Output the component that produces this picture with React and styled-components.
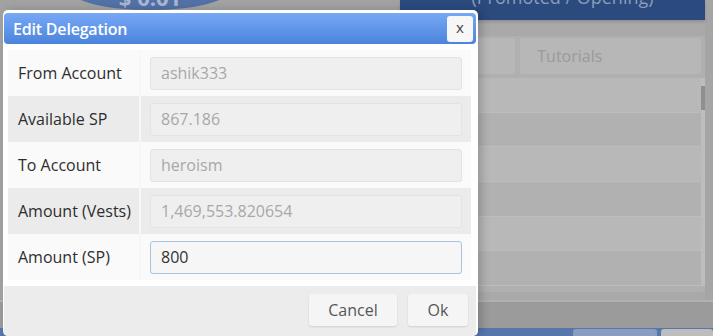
import React from "react";
import styled, { createGlobalStyle } from "styled-components";

const Global = createGlobalStyle`
  html, body { margin: 0; padding: 0; }
  body { font-family: "Open Sans", "Noto Sans", sans-serif; background: #a3a3a3; overflow: hidden; }
`;

const Stage = styled.div`
  position: relative;
  width: 713px;
  height: 336px;
  overflow: hidden;
  background: #a5a5a5;
  display: grid;
  grid-template-rows: 1fr 28px 8px;
`;

const Upper = styled.div`
  display: grid;
  grid-template-columns: 400px 305px 8px;
  min-height: 0;
`;

const LeftCol = styled.div`
  display: flex;
  justify-content: center;
  padding-right: 100px;
  background: #a2a2a2;
`;

const PriceBlob = styled.div`
  width: 160px;
  height: 40px;
  margin-top: -30px;
  border-radius: 50%;
  background: #5271a6;
  color: #a9b7d0;
  font-size: 22px;
  font-weight: 700;
  line-height: 1;
  display: flex;
  align-items: flex-end;
  justify-content: center;
  padding-bottom: 2px;
  box-sizing: border-box;
`;

const RightCol = styled.div`
  display: flex;
  flex-direction: column;
  gap: 16px;
  padding-bottom: 8px;
  background: #a9a9a9;
`;

const PromoBar = styled.div`
  height: 20px;
  background: #2b4a7e;
  color: #8d9dbb;
  font-size: 18px;
  line-height: 1;
  display: flex;
  justify-content: center;
  align-items: flex-start;
  overflow: hidden;
  box-shadow: 0 2px 3px rgba(0,0,0,0.15);
  padding-left: 20px;
`;

const PromoText = styled.span`
  margin-top: -12px;
`;

const Panel = styled.div`
  flex: 1;
  display: flex;
  flex-direction: column;
  background: #b0b0b0;
  border-radius: 3px;
  padding: 2px 0 6px 0;
`;

const Tabs = styled.div`
  display: flex;
  gap: 5px;
  padding: 0 4px 4px 0;
`;

const Tab = styled.div`
  flex: ${p => p.$grow || 1};
  height: 36px;
  background: #b7b7b7;
  border-radius: 3px;
  color: #9a9a9a;
  font-size: 16px;
  display: flex;
  align-items: center;
  padding-left: 17px;
`;

const List = styled.div`
  flex: 1;
  display: grid;
  grid-template-columns: 1fr 4px;
`;

const Rows = styled.div`
  display: flex;
  flex-direction: column;
`;

const ListRow = styled.div`
  flex: 1;
  background: ${p => (p.$alt ? "#b1b1b1" : "#b8b8b8")};
  border-bottom: 1px solid #bdbdbd;
`;

const Scroll = styled.div`
  background: #bdbdbd;
  display: flex;
  flex-direction: column;
`;

const Thumb = styled.div`
  height: 24px;
  margin-top: 8px;
  background: #8f8f8f;
`;

const Band = styled.div`
  background: #9b9b9b;
  border-top: 2px solid #b0b0b0;
`;

const BottomStrip = styled.div`
  background: #5776ab;
  display: flex;
  justify-content: flex-end;
  gap: 4px;
  padding-top: 1px;
`;

const StripBtn = styled.div`
  width: ${p => p.$w}px;
  background: ${p => p.$c};
  border-radius: 3px 3px 0 0;
`;

const Dialog = styled.div`
  position: absolute;
  left: 3px;
  top: 10px;
  width: 475px;
  height: 326px;
  box-sizing: border-box;
  background: #ffffff;
  border-radius: 5px;
  padding: 3px 2px 0 1px;
  display: flex;
  flex-direction: column;
  box-shadow: 4px 0 8px rgba(0,0,0,0.18);
`;

const Header = styled.div`
  height: 31px;
  flex: none;
  border-radius: 4px;
  background: linear-gradient(#78a8f6, #4b84dc);
  display: flex;
  align-items: center;
  justify-content: space-between;
  padding: 0 3px 0 9px;
`;

const Title = styled.div`
  color: #ffffff;
  font-size: 16px;
  font-weight: 600;
  letter-spacing: -0.2px;
`;

const CloseBtn = styled.button`
  width: 26px;
  height: 26px;
  border: none;
  border-radius: 3px;
  background: #f7f7f7;
  color: #444;
  font-family: "Open Sans", sans-serif;
  font-size: 15px;
  padding: 0 0 2px 0;
  line-height: 1;
`;

const Body = styled.div`
  padding: 6px 5px 6px 4px;
  flex: none;
`;

const Table = styled.div`
  display: flex;
  flex-direction: column;
`;

const Row = styled.div`
  height: 46px;
  display: grid;
  grid-template-columns: 133px 1fr;
  background: ${p => (p.$alt ? "#ebebeb" : "#fafafa")};
`;

const Label = styled.div`
  display: flex;
  align-items: center;
  padding-left: 10px;
  font-size: 16px;
  color: #2e2e2e;
  border-right: 2px solid #f7f7f7;
`;

const Cell = styled.div`
  display: flex;
  align-items: center;
  padding: 0 9px 0 9px;
`;

const Input = styled.input`
  width: 100%;
  height: 33px;
  box-sizing: border-box;
  border: 1px solid ${p => (p.disabled ? "#e3e3e3" : "#a8c4de")};
  border-radius: 3px;
  background: ${p => (p.disabled ? "#efefef" : "#f6f6f6")};
  color: ${p => (p.disabled ? "#a8a8a8" : "#333")};
  -webkit-text-fill-color: ${p => (p.disabled ? "#a8a8a8" : "#333")};
  opacity: 1;
  font-family: "Open Sans", sans-serif;
  font-size: 16px;
  padding: 0 10px;
  outline: none;
`;

const Footer = styled.div`
  flex: 1;
  background: #ececec;
  border-radius: 0 0 4px 4px;
  display: flex;
  justify-content: flex-end;
  align-items: flex-start;
  gap: 11px;
  padding: 8px 8px 0 0;
`;

const Btn = styled.button`
  height: 32px;
  min-width: ${p => p.$w}px;
  border: none;
  border-radius: 3px;
  background: #f5f5f5;
  box-shadow: 0 1px 2px rgba(0,0,0,0.12);
  color: #555;
  font-family: "Open Sans", sans-serif;
  font-size: 16px;
`;

const fields = [
  { label: "From Account", value: "ashik333", disabled: true },
  { label: "Available SP", value: "867.186", disabled: true },
  { label: "To Account", value: "heroism", disabled: true },
  { label: "Amount (Vests)", value: "1,469,553.820654", disabled: true },
  { label: "Amount (SP)", value: "800", disabled: false },
];

export default function App() {
  return (
    <>
      <Global />
      <Stage>
        <Upper>
          <LeftCol>
            <PriceBlob>$ 0.01</PriceBlob>
          </LeftCol>
          <RightCol>
            <PromoBar>
              <PromoText>(Promoted / Opening)</PromoText>
            </PromoBar>
            <Panel>
              <Tabs>
                <Tab $grow={0.6} />
                <Tab $grow={1}>Tutorials</Tab>
              </Tabs>
              <List>
                <Rows>
                  {[0, 1, 2, 3, 4, 5].map(i => (
                    <ListRow key={i} $alt={i % 2 === 1} />
                  ))}
                </Rows>
                <Scroll>
                  <Thumb />
                </Scroll>
              </List>
            </Panel>
          </RightCol>
          <div />
        </Upper>
        <Band />
        <BottomStrip>
          <StripBtn $w={84} $c="#8a9dc0" />
          <StripBtn $w={52} $c="#bdbdbd" />
        </BottomStrip>

        <Dialog>
          <Header>
            <Title>Edit Delegation</Title>
            <CloseBtn>x</CloseBtn>
          </Header>
          <Body>
            <Table>
              {fields.map((f, i) => (
                <Row key={f.label} $alt={i % 2 === 1}>
                  <Label>{f.label}</Label>
                  <Cell>
                    <Input defaultValue={f.value} disabled={f.disabled} />
                  </Cell>
                </Row>
              ))}
            </Table>
          </Body>
          <Footer>
            <Btn $w={88}>Cancel</Btn>
            <Btn $w={60}>Ok</Btn>
          </Footer>
        </Dialog>
      </Stage>
    </>
  );
}
